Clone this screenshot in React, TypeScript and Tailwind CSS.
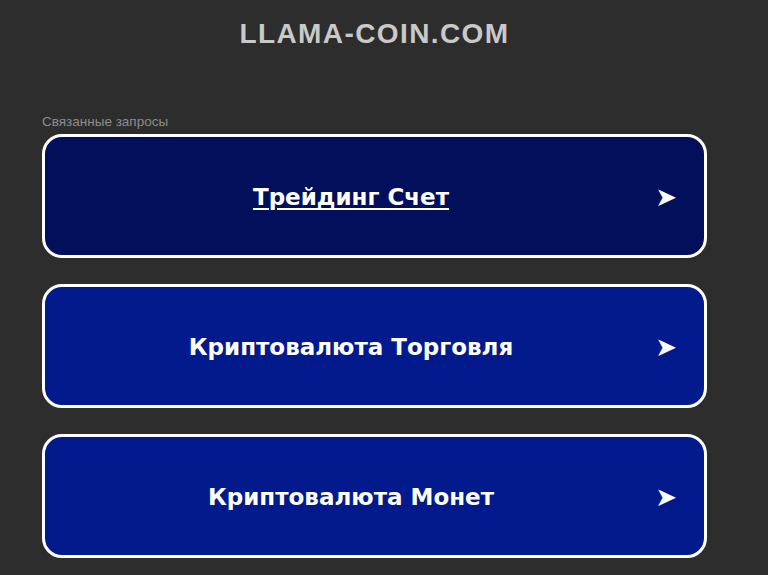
import React from "react"

const LINKS = [
  { label: "Трейдинг Счет", visited: true },
  { label: "Криптовалюта Торговля", visited: false },
  { label: "Криптовалюта Монет", visited: false },
]

function LinkCard({ label, visited }: { label: string; visited: boolean }) {
  return (
    <a
      href="#"
      className={`relative flex h-[124px] items-center justify-center rounded-[20px] border-[3px] border-white pr-[47px] text-white ${
        visited ? "bg-[#020f5a]" : "bg-[#021a8b]"
      }`}
    >
      <span
        className={`mt-[2px] text-[23px] font-bold ${visited ? "underline underline-offset-[3px] decoration-2" : ""}`}
        style={{ fontFamily: '"DejaVu Sans", Verdana, sans-serif' }}
      >
        {label}
      </span>
      <span
        className="absolute right-[27px] top-1/2 mt-[1px] -translate-y-1/2 text-[26px] leading-none"
        style={{ fontFamily: '"DejaVu Sans", sans-serif' }}
      >
        ➤
      </span>
    </a>
  )
}

export default function App() {
  return (
    <div className="min-h-[575px] bg-[#2d2d2d] pb-8" style={{ fontFamily: '"Liberation Sans", Arial, sans-serif' }}>
      <div className="mx-[42px] w-[665px]">
        <header className="pt-[17px] text-center">
          <h1 className="text-[28px] font-bold leading-[34px] tracking-[1.4px] text-[#c9c9c9]">LLAMA-COIN.COM</h1>
        </header>
        <main className="mt-[63px]">
          <p className="mb-[5px] text-[13.5px] leading-[15px] text-[#8c8c8c]">Связанные запросы</p>
          <div className="flex flex-col gap-[26px]">
            {LINKS.map((l) => (
              <LinkCard key={l.label} {...l} />
            ))}
          </div>
        </main>
      </div>
    </div>
  )
}
